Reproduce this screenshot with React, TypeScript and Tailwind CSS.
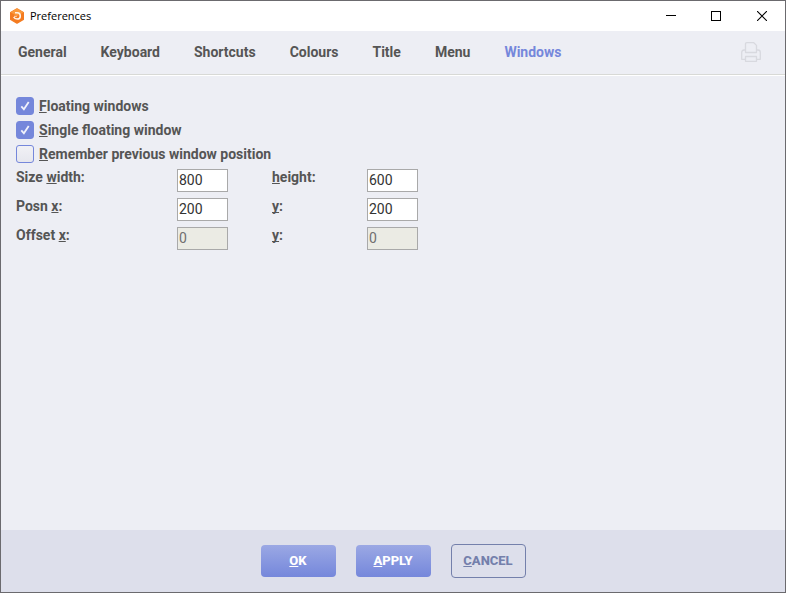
import { useState, type ReactNode } from "react";

const tabs = ["General", "Keyboard", "Shortcuts", "Colours", "Title", "Menu", "Windows"];

function AccessKey({ children }: { children: ReactNode }) {
  return <span className="underline decoration-1 underline-offset-1 [text-decoration-skip-ink:none]">{children}</span>;
}

function AppLogo() {
  return (
    <svg aria-hidden="true" className="size-4" viewBox="0 0 16 16">
      <path d="M8 .9 14.300 4.500v7L8 15.100 1.700 11.500v-7Z" fill="#f47b20" stroke="#f47b20" strokeWidth="1.400" strokeLinejoin="round" />
      <path d="M8 .5 14.500 4.300 8 8 1.500 4.300Z" fill="#fb9a3c" />
      <path d="M6 4.800h2.200a3.100 3.100 0 0 1 0 6.200C6.500 11 5.300 10.300 4.700 9" fill="none" stroke="#fff3e6" strokeWidth="1.600" />
      <path d="M5 8.300h2.800" fill="none" stroke="#ffdcb8" strokeWidth="1" />
    </svg>
  );
}

function TitleBar() {
  const control = "flex h-full w-[46px] items-center justify-center";
  return (
    <header className="flex h-[30px] items-center bg-white pl-2">
      <AppLogo />
      <h1 className="ml-[5px] flex-1 font-['Open_Sans','Noto_Sans',sans-serif] text-[11px] leading-4 font-normal text-black">
        Preferences
      </h1>
      <button type="button" aria-label="Minimize" className={control}>
        <svg className="size-3" viewBox="0 0 12 12" shapeRendering="crispEdges">
          <path d="M2 5.500h10" stroke="#000" />
        </svg>
      </button>
      <button type="button" aria-label="Maximize" className={control}>
        <svg className="size-[10px]" viewBox="0 0 10 10" shapeRendering="crispEdges">
          <path d="M.5.5h9v9h-9Z" fill="none" stroke="#000" />
        </svg>
      </button>
      <button type="button" aria-label="Close" className={control}>
        <svg className="size-[10px]" viewBox="0 0 10 10">
          <path d="m0 0 10 10M10 0 0 10" stroke="#000" strokeWidth="1.100" />
        </svg>
      </button>
    </header>
  );
}

function PrinterIcon() {
  return (
    <svg className="size-5" viewBox="0 0 20 20" fill="none" stroke="#d8d9df" strokeWidth="1.300" strokeLinejoin="round">
      <path d="M4.500 10.500V2q0-1.300 1.300-1.300h7L15.500 3.400v7.100Z" />
      <path d="M4.500 8H3Q.7 8 .7 10.500v6.800h3.800M15.500 8H17q2.300 0 2.300 2.500v6.800h-3.800" />
      <path d="M4.500 14.500h11v4.800h-11Z" />
    </svg>
  );
}

function CheckRow({ label, initial }: { label: string; initial: boolean }) {
  const [checked, setChecked] = useState(initial);
  return (
    <label className="flex h-6 items-center gap-[5px]">
      <span className="relative size-[18px]">
        <input
          type="checkbox"
          checked={checked}
          onChange={(e) => setChecked(e.target.checked)}
          className="peer block size-[18px] appearance-none rounded-[3px] border border-[#7587db] bg-linear-to-b from-[#f1f1f5] to-[#e6e7ee] checked:from-[#7587db] checked:to-[#7587db]"
        />
        <svg
          aria-hidden="true"
          className="pointer-events-none absolute inset-0 hidden size-[18px] peer-checked:block"
          viewBox="0 0 18 18"
          fill="none"
        >
          <path d="m5.300 9.300 2.600 3L12.700 5" stroke="#f1f2fb" strokeWidth="1.800" />
        </svg>
      </span>
      <span>
        <AccessKey>{label[0]}</AccessKey>
        {label.slice(1)}
      </span>
    </label>
  );
}

function NumberField({ id, before, accessKey, after, value, disabled }: {
  id: string;
  before: string;
  accessKey: string;
  after: string;
  value: string;
  disabled?: boolean;
}) {
  return (
    <>
      <label htmlFor={id}>
        {before}
        <AccessKey>{accessKey}</AccessKey>
        {after}
      </label>
      <input
        id={id}
        type="text"
        defaultValue={value}
        disabled={disabled}
        className="h-[23px] w-[51px] border border-[#a9a9a9] bg-white px-px pb-px text-[14px] font-normal text-[#333] disabled:bg-[#ebebe4] disabled:text-[#707070]"
      />
    </>
  );
}

export default function App() {
  return (
    <div className="flex min-h-screen flex-col border border-[#6b6a6e] bg-[#edeef4] font-[Roboto,sans-serif] text-[14px] leading-4 font-bold text-[#555]">
      <TitleBar />
      <div className="flex h-[45px] items-center justify-between border-b border-white pr-6 pb-0.5 pl-[17px] shadow-[inset_0_-1px_0_#d8d9d6]">
        <nav className="flex gap-[34px]">
          {tabs.map((tab) => (
            <a key={tab} href="#" className={tab === "Windows" ? "text-[#7587db]" : ""}>
              {tab}
            </a>
          ))}
        </nav>
        <button type="button" aria-label="Print">
          <PrinterIcon />
        </button>
      </div>
      <main className="flex-1 px-[15px] pt-[18px]">
        <CheckRow label="Floating windows" initial />
        <CheckRow label="Single floating window" initial />
        <CheckRow label="Remember previous window position" initial={false} />
        <div className="grid auto-rows-[29px] grid-cols-[161px_95px_95px_51px] items-start pt-[3px]">
          <NumberField id="width" before="Size " accessKey="w" after="idth:" value="800" />
          <NumberField id="height" before="" accessKey="h" after="eight:" value="600" />
          <NumberField id="pos-x" before="Posn " accessKey="x" after=":" value="200" />
          <NumberField id="pos-y" before="" accessKey="y" after=":" value="200" />
          <NumberField id="offset-x" before="Offset " accessKey="x" after=":" value="0" disabled />
          <NumberField id="offset-y" before="" accessKey="y" after=":" value="0" disabled />
        </div>
      </main>
      <footer className="flex h-[62px] items-center justify-center gap-5 bg-[#dddfeb] text-[13px] font-extrabold">
        <button type="button" className="h-8 w-[75px] rounded bg-linear-to-b from-[#9ba8e4] to-[#7587db] text-white">
          <AccessKey>O</AccessKey>K
        </button>
        <button type="button" className="h-8 w-[75px] rounded bg-linear-to-b from-[#9ba8e4] to-[#7587db] text-white">
          <AccessKey>A</AccessKey>PPLY
        </button>
        <button type="button" className="h-[34px] w-[75px] rounded border border-[#7480ab] text-[#7480ab]">
          <AccessKey>C</AccessKey>ANCEL
        </button>
      </footer>
    </div>
  );
}
